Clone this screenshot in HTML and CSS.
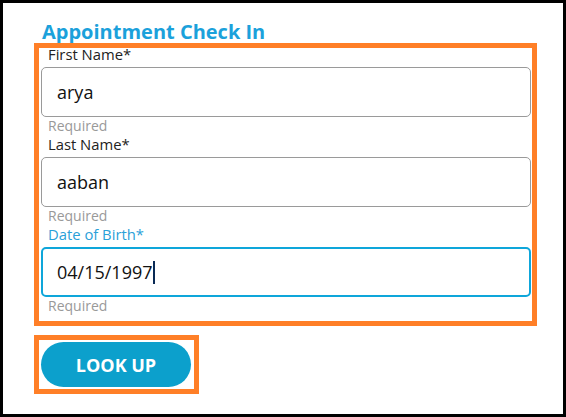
FILE: index.html
```html
<!DOCTYPE html>
<html lang="en">
<head>
<meta charset="utf-8">
<title>Appointment Check In</title>
<link rel="stylesheet" href="styles.css">
</head>
<body>
<main class="frame">
  <h1 class="title">Appointment Check In</h1>
  <form class="form highlight-form">
    <div class="field">
      <label class="label">First Name*</label>
      <div class="input">arya</div>
      <div class="helper">Required</div>
    </div>
    <div class="field">
      <label class="label">Last Name*</label>
      <div class="input">aaban</div>
      <div class="helper">Required</div>
    </div>
    <div class="field field-focused">
      <label class="label">Date of Birth*</label>
      <div class="input">04/15/1997<span class="caret"></span></div>
      <div class="helper">Required</div>
    </div>
  </form>
  <div class="actions">
    <button type="button" class="btn">LOOK UP</button>
  </div>
</main>
</body>
</html>
```

FILE: styles.css
```css
html, body {
  margin: 0;
  padding: 0;
  background: #ffffff;
}

.frame {
  box-sizing: border-box;
  width: 566px;
  height: 417px;
  border: 3px solid #000000;
  padding: 17px 31px 0 36px;
  font-family: "Open Sans", "Noto Sans", sans-serif;
  background: #ffffff;
}

.title {
  margin: 0;
  padding-left: 3px;
  font-size: 20px;
  line-height: 24px;
  height: 24px;
  font-weight: 700;
  color: #1ba1db;
}

.form {
  position: relative;
  display: flex;
  flex-direction: column;
  margin: 0;
}

.form::after,
.actions::after {
  content: "";
  position: absolute;
  border: 5px solid #ff7f27;
  pointer-events: none;
}

.form::after {
  top: -1px;
  bottom: -12px;
  left: -5px;
  right: -5px;
}

.field {
  display: flex;
  flex-direction: column;
}

.label {
  display: block;
  padding-left: 9px;
  font-size: 14.8px;
  line-height: 20px;
  height: 20px;
  margin-bottom: 3px;
  color: #222222;
}

.input {
  box-sizing: border-box;
  height: 50px;
  margin: 0 1px 0 2px;
  padding: 0 15px;
  display: flex;
  align-items: center;
  border: 1px solid #9a9a9a;
  border-radius: 5px;
  font-size: 18px;
  color: #111111;
  background: #ffffff;
}

.helper {
  padding-left: 9px;
  font-size: 14px;
  line-height: 17px;
  height: 17px;
  color: #999999;
}

.field-focused .label {
  color: #2aa0d8;
}

.field-focused .input {
  border: 2px solid #0ea6da;
  padding: 0 14px;
}

.caret {
  display: inline-block;
  width: 2px;
  height: 23px;
  background: #0a2a55;
}

.actions {
  position: relative;
  display: flex;
  width: 150px;
  margin: 28px 0 0 2px;
}

.actions::after {
  top: -7px;
  bottom: -7px;
  left: -7px;
  right: -8px;
}

.btn {
  width: 150px;
  height: 45px;
  border: none;
  border-radius: 23px;
  background: #0ca0cc;
  color: #ffffff;
  font-family: "Open Sans", "Noto Sans", sans-serif;
  font-weight: 700;
  font-size: 18px;
  padding: 0;
  cursor: pointer;
}
```
